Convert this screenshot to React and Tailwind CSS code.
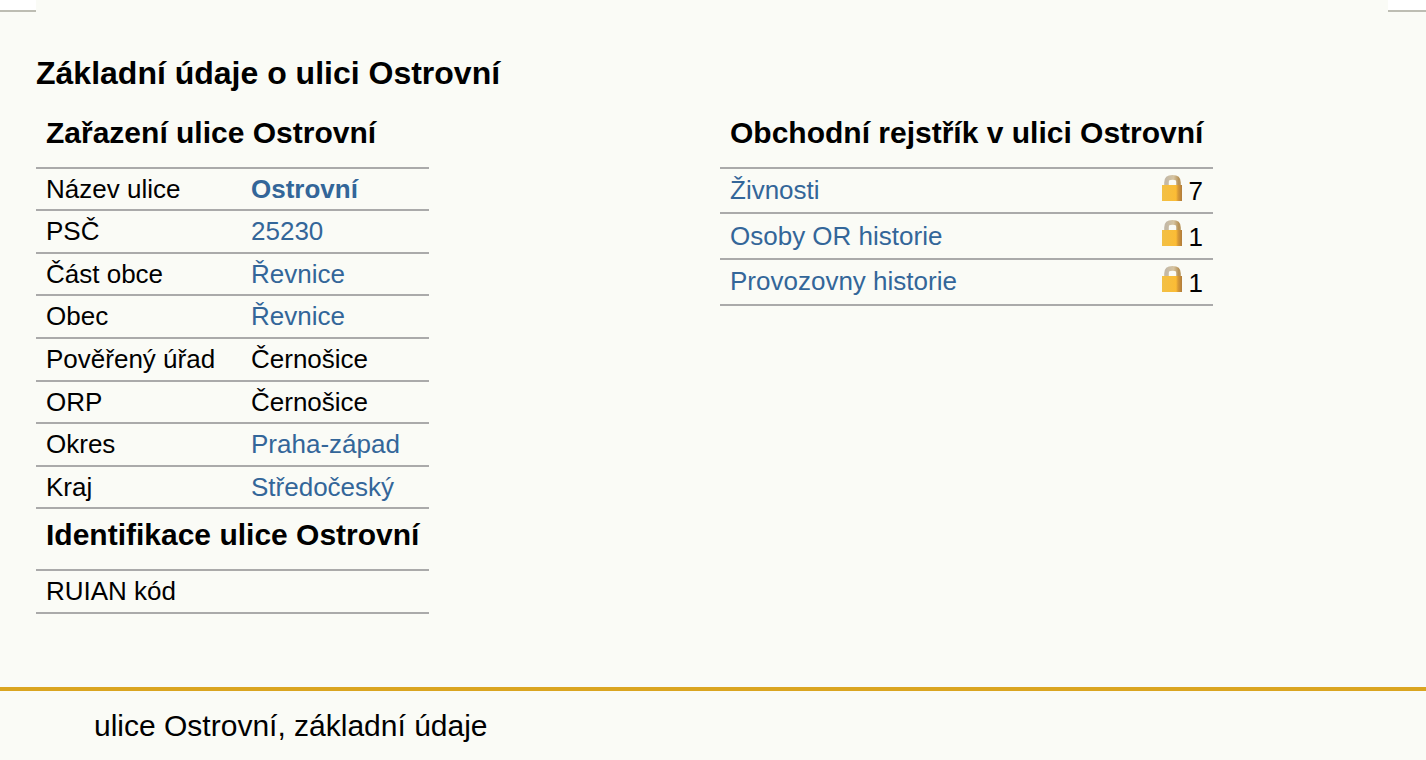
const zarazeni = [
  { label: 'Název ulice', value: 'Ostrovní', link: true, bold: true },
  { label: 'PSČ', value: '25230', link: true },
  { label: 'Část obce', value: 'Řevnice', link: true },
  { label: 'Obec', value: 'Řevnice', link: true },
  { label: 'Pověřený úřad', value: 'Černošice' },
  { label: 'ORP', value: 'Černošice' },
  { label: 'Okres', value: 'Praha-západ', link: true },
  { label: 'Kraj', value: 'Středočeský', link: true },
];

const rejstrik = [
  { label: 'Živnosti', count: 7 },
  { label: 'Osoby OR historie', count: 1 },
  { label: 'Provozovny historie', count: 1 },
];

function Lock({ id }) {
  return (
    <svg width="20" height="26" viewBox="0 0 20 26" className="mb-[6px] shrink-0">
      <defs>
        <linearGradient id={id + 'body'} x1="0" y1="0" x2="1" y2="0">
          <stop offset="0" stopColor="#f2c045" />
          <stop offset="0.7" stopColor="#fbbc35" />
          <stop offset="0.8" stopColor="#d99a34" />
          <stop offset="1" stopColor="#b07c3c" />
        </linearGradient>
        <linearGradient id={id + 'arch'} x1="0" y1="0" x2="1" y2="0">
          <stop offset="0" stopColor="#c4b9a6" />
          <stop offset="0.6" stopColor="#d6c4a0" />
          <stop offset="1" stopColor="#b8945a" />
        </linearGradient>
      </defs>
      <path d="M4.5 11V7.5C4.5 3.5 6.5 2.4 10.5 2.4S16.5 3.5 16.5 7.5V11" fill="none" stroke={`url(#${id}arch)`} strokeWidth="4.6" />
      <rect x="0" y="10" width="20" height="16" fill={`url(#${id}body)`} />
    </svg>
  );
}

function Row({ children, className }) {
  return <div className={`flex border-b-2 border-[#aaaaaa] ${className}`}>{children}</div>;
}

export default function App() {
  return (
    <div className="min-h-[760px] bg-[#fafbf6] font-['Liberation_Sans',Arial,sans-serif] text-[26px] text-black">
      <div className="flex justify-between">
        <div className="h-3 w-9 border-b-2 border-[#bdbdb3] bg-white" />
        <div className="h-3 w-[38px] border-b-2 border-[#bdbdb3] bg-white" />
      </div>

      <div className="h-[675px] px-9 pt-[43px]">
        <h1 className="text-[32px] font-bold leading-9">Základní údaje o ulici Ostrovní</h1>

        <div className="mt-[11px] flex items-start">
          <div className="w-[393px]">
            <h2 className="h-[64.8px] px-2.5 pt-[13px] text-[30px] font-bold leading-9 whitespace-nowrap">Zařazení ulice Ostrovní</h2>
            <div className="border-t-2 border-[#aaaaaa]">
              {zarazeni.map((r) => (
                <Row key={r.label} className="h-[42.55px] items-center px-2.5 pt-[0.4px]">
                  <span className="w-[205px]">{r.label}</span>
                  <span className={`${r.link ? 'text-[#336699]' : ''} ${r.bold ? 'font-bold' : ''}`}>{r.value}</span>
                </Row>
              ))}
            </div>
            <h2 className="h-[60.2px] px-2.5 pt-2 text-[30px] font-bold leading-9 whitespace-nowrap">Identifikace ulice Ostrovní</h2>
            <div className="border-t-2 border-[#aaaaaa]">
              <Row className="h-[42.55px] items-center px-2.5">RUIAN kód</Row>
            </div>
          </div>

          <div className="ml-[291px] w-[493px]">
            <h2 className="h-[64.8px] px-2.5 pt-[13px] text-[30px] font-bold leading-9 whitespace-nowrap">Obchodní rejstřík v ulici Ostrovní</h2>
            <div className="border-t-2 border-[#aaaaaa]">
              {rejstrik.map((r, i) => (
                <Row key={r.label} className="h-[45.6px] items-center justify-between px-2.5">
                  <a className="text-[#336699]">{r.label}</a>
                  <span className="flex items-center gap-[7px]">
                    <Lock id={'lock' + i} />
                    <span className="mt-[2.6px]">{r.count}</span>
                  </span>
                </Row>
              ))}
            </div>
          </div>
        </div>
      </div>

      <div className="h-[73px] border-t-4 border-[#daa520] pl-[94px] pt-[17px] text-[30px] leading-9">
        ulice Ostrovní, základní údaje
      </div>
    </div>
  );
}
